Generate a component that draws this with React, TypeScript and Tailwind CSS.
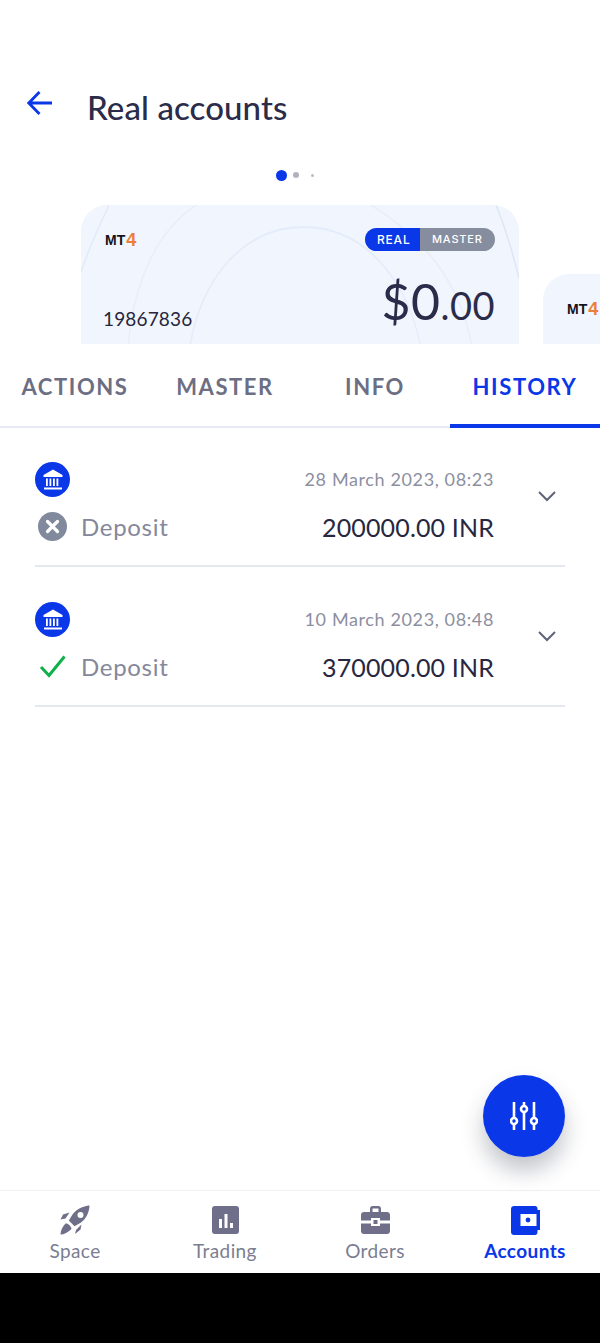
import React from "react";

const font = { fontFamily: '"Lato", "Noto Sans", sans-serif' };

function CardArcs() {
  return (
    <svg className="absolute inset-0 h-full w-full" viewBox="0 0 438 139" fill="none" preserveAspectRatio="none">
      <path d="M0 55C10 30 20 15 28 0" stroke="#e3eaf8" strokeWidth="1.5" />
      <path d="M46 139C46 75 70 25 115 0" stroke="#e8eefa" strokeWidth="1.5" />
      <path d="M106 139C110 65 160 18 222 18C290 18 336 70 344 139" stroke="#e4ecfa" strokeWidth="1.5" />
      <path d="M290 0C350 30 390 75 394 139" stroke="#e8eefa" strokeWidth="1.5" />
      <path d="M415 0C425 20 432 40 438 60" stroke="#dfe6f5" strokeWidth="1.5" />
    </svg>
  );
}

function Mt4({ className = "" }: { className?: string }) {
  return (
    <div className={`flex items-center leading-none ${className}`} style={{ fontFamily: '"Liberation Sans", sans-serif' }}>
      <span className="text-[14px] font-bold text-[#14141c]">MT</span>
      <span className="ml-[1px] text-[18px] font-bold text-[#ea7f3c]">4</span>
    </div>
  );
}

function BankBadge() {
  return (
    <div className="flex h-[35px] w-[35px] items-center justify-center rounded-full bg-[#0a37e8]">
      <svg width="24" height="24" viewBox="0 0 24 24" fill="none">
        <path d="M12 1.5L21.5 7V9H2.5V7L12 1.5Z" fill="#fff" />
        <rect x="5" y="10.5" width="1.8" height="7.5" fill="#fff" />
        <rect x="8.5" y="10.5" width="1.8" height="7.5" fill="#fff" />
        <rect x="12" y="10.5" width="1.8" height="7.5" fill="#fff" />
        <rect x="15.5" y="10.5" width="1.8" height="7.5" fill="#fff" />
        <rect x="3" y="19.5" width="18" height="2" fill="#fff" />
      </svg>
    </div>
  );
}

function FailedIcon() {
  return (
    <svg width="29" height="29" viewBox="0 0 29 29">
      <circle cx="14.5" cy="14.5" r="14.5" fill="#818a9d" />
      <path d="M9.5 9.5L19.5 19.5M19.5 9.5L9.5 19.5" stroke="#fff" strokeWidth="3.2" strokeLinecap="round" />
    </svg>
  );
}

function DoneIcon() {
  return (
    <svg width="29" height="29" viewBox="0 0 29 29" fill="none">
      <path d="M3 15L11 23.5L26.5 4.5" stroke="#0fb04a" strokeWidth="3" />
    </svg>
  );
}

function Chevron() {
  return (
    <svg width="20" height="12" viewBox="0 0 20 12" fill="none">
      <path d="M2 2L10 10L18 2" stroke="#5f6378" strokeWidth="2" />
    </svg>
  );
}

function HistoryRow({ date, amount, status }: { date: string; amount: string; status: React.ReactNode }) {
  return (
    <div className="mx-[35px] flex h-[140px] items-start border-b-2 border-[#e6e8ef] pt-[35px]">
      <div className="flex flex-col">
        <BankBadge />
        <div className="mt-[15px] flex items-center">
          <div className="ml-[3px] flex h-[29px] w-[29px] items-center justify-center">{status}</div>
          <span className="ml-[14px] text-[24px] leading-[29px] tracking-[0.7px] text-[#85879a]">Deposit</span>
        </div>
      </div>
      <div className="flex-1 pt-[6px] text-right">
        <div className="text-[18px] leading-[22px] tracking-[0.62px] text-[#8d8f9f]">{date}</div>
        <div className="mt-[23px] text-[25px] leading-[29px] tracking-[0.15px] text-[#27273f]">{amount}</div>
      </div>
      <div className="ml-[43px] mr-[8px] mt-[28px]">
        <Chevron />
      </div>
    </div>
  );
}

function NavItem({ label, icon, active }: { label: string; icon: React.ReactNode; active?: boolean }) {
  return (
    <div className="flex flex-1 flex-col items-center pt-[14px]">
      <div className="flex h-[30px] items-center justify-center">{icon}</div>
      <span className={`mt-[5px] text-[19px] leading-[22px] tracking-[0.4px] ${active ? "font-bold text-[#0a37e8]" : "text-[#7b7d90]"}`}>{label}</span>
    </div>
  );
}

export default function App() {
  return (
    <div className="relative flex h-[1343px] w-[600px] flex-col overflow-hidden bg-white" style={font}>
      <header className="flex h-[160px] items-start pl-[27px] pt-[87px]">
        <svg width="26" height="26" viewBox="0 0 26 26" fill="none" className="mt-[3px]">
          <path d="M25 13H2M12.5 2L1.8 13L12.5 24" stroke="#0a37e8" strokeWidth="2.8" />
        </svg>
        <h1 className="ml-[34px] text-[33px] font-medium leading-[40px] tracking-[0.1px] text-[#2b2b4a]">Real accounts</h1>
      </header>

      <div className="flex h-[30px] items-center justify-center pr-[10px]">
        <span className="h-[11px] w-[11px] rounded-full bg-[#0a37e8]" />
        <span className="ml-[6px] h-[6px] w-[6px] rounded-full bg-[#b0b3bf]" />
        <span className="ml-[12px] h-[3px] w-[3px] rounded-full bg-[#b9bbc6]" />
      </div>

      {/* Account cards carousel, clipped at the tab strip */}
      <div className="flex h-[154px] items-start gap-[24px] overflow-hidden pl-[81px] pt-[15px]">
        <div className="relative h-[170px] w-[438px] shrink-0 overflow-hidden rounded-[26px] bg-[#f1f5fd]">
          <CardArcs />
          <div className="relative flex h-full flex-col pl-[22px] pr-[24px]">
            <div className="flex items-start justify-between pt-[23px]">
              <Mt4 className="pl-[2px] pt-[3px]" />
              <div className="flex h-[23px] overflow-hidden rounded-full text-[12px] leading-[23px] tracking-[0.8px] text-white" style={{ fontFamily: '"Inter", sans-serif', fontWeight: 500 }}>
                <span className="w-[55px] bg-[#0a37e8] pl-[12px]">REAL</span>
                <span className="w-[75px] bg-[#858d9f] pl-[12px] text-[11px]">MASTER</span>
              </div>
            </div>
            <div className="mt-[22px] flex items-end justify-between">
              <span className="mb-[12px] text-[19px] leading-[22px] tracking-[0.15px] text-[#26263c]">19867836</span>
              <span className="leading-[56px] tracking-[0.5px] text-[#2b2b4a]">
                <span className="text-[50px]">$0</span>
                <span className="text-[38px]">.00</span>
              </span>
            </div>
          </div>
        </div>
        <div className="relative mt-[69px] h-[100px] w-[200px] shrink-0 overflow-hidden rounded-[26px] bg-[#f1f5fd] pl-[24px] pt-[26px]">
          <Mt4 />
        </div>
      </div>

      <nav className="flex h-[84px] border-b-2 border-[#e7eaf3] text-[22px] font-bold leading-[26px] tracking-[1.6px] text-[#6c6e84]">
        <div className="-mb-[2px] flex w-[150px] justify-center pt-[30px]">ACTIONS</div>
        <div className="-mb-[2px] flex w-[150px] justify-center pt-[30px]">MASTER</div>
        <div className="-mb-[2px] flex w-[150px] justify-center pt-[30px]">INFO</div>
        <div className="-mb-[2px] flex w-[150px] justify-center border-b-[4px] border-[#0a37e8] pt-[30px] text-[#0a37e8]">HISTORY</div>
      </nav>

      <main className="-mt-[1px] flex-1">
        <HistoryRow date="28 March 2023, 08:23" amount="200000.00 INR" status={<FailedIcon />} />
        <HistoryRow date="10 March 2023, 08:48" amount="370000.00 INR" status={<DoneIcon />} />
      </main>

      <button className="absolute left-[483px] top-[1075px] flex h-[82px] w-[82px] items-center justify-center rounded-full bg-[#0a37e8] shadow-[0_14px_22px_rgba(40,45,70,0.28)]">
        <svg width="28" height="30" viewBox="0 0 28 30" fill="none" stroke="#fff" strokeWidth="2.6">
          <path d="M4 1V16M4 24V29M14 1V4M14 12V29M24 1V16M24 24V29" />
          <circle cx="4" cy="20" r="3" />
          <circle cx="14" cy="8" r="3" />
          <circle cx="24" cy="20" r="3" />
        </svg>
      </button>

      <footer className="flex h-[83px] border-t border-[#eef0f4] bg-white">
        <NavItem
          label="Space"
          icon={
            <svg width="30" height="30" viewBox="0 0 30 30" fill="#6f6f8a">
              <path fillRule="evenodd" d="M28.5 0.5C22 1.5 16 4.5 12.5 9.5L8.8 15.5L14.5 21.2L21 17.5C26 14 28.8 8 29.5 1.5C29.6 0.9 29.1 0.4 28.5 0.5ZM20.5 7A3 3 0 1 0 20.5 13A3 3 0 1 0 20.5 7Z" />
              <path d="M9.5 7.5L3 9.5L0.5 14.5L5.5 13.5Z" />
              <path d="M16 25L21.5 19.5L20.5 24.5L15 29Z" />
              <path d="M5.5 18.5C8 18 11 21 11.5 24C8 27.5 4 29.5 0.5 29.5C0.5 25.5 2.5 21.5 5.5 18.5Z" />
            </svg>
          }
        />
        <NavItem
          label="Trading"
          icon={
            <svg width="27" height="28" viewBox="0 0 27 28">
              <rect width="27" height="28" rx="3" fill="#6f6f8a" />
              <rect x="7" y="13" width="3" height="9" fill="#fff" />
              <rect x="12.5" y="8" width="3" height="14" fill="#fff" />
              <rect x="18" y="17" width="3" height="5" fill="#fff" />
            </svg>
          }
        />
        <NavItem
          label="Orders"
          icon={
            <svg width="29" height="28" viewBox="0 0 29 28" fill="#6f6f8a">
              <path fillRule="evenodd" d="M9 6V3C9 1.2 10 0 11.5 0H17.5C19 0 20 1.2 20 3V6H26C27.7 6 29 7.3 29 9V14.5H19V12H10V14.5H0V9C0 7.3 1.3 6 3 6ZM11.5 2.5V6H17.5V2.5Z" />
              <path d="M0 17.5H10V20H19V17.5H29V25C29 26.7 27.7 28 26 28H3C1.3 28 0 26.7 0 25Z" />
              <rect x="12.5" y="14" width="4" height="4" fill="#6f6f8a" />
            </svg>
          }
        />
        <NavItem
          active
          label="Accounts"
          icon={
            <svg width="29" height="29" viewBox="0 0 29 29" fill="#0a37e8">
              <path d="M3 0H24C25.5 0 26.5 1 26.5 2.5V4H6V24H26.5V26C26.5 27.7 25.5 29 24 29H3C1.3 29 0 27.7 0 26V3C0 1.3 1.3 0 3 0Z" />
              <path fillRule="evenodd" d="M6 4H29V24H6ZM9.5 8V20H25.5V8Z" />
              <circle cx="17" cy="14" r="2.4" />
            </svg>
          }
        />
      </footer>

      <div className="h-[70px] bg-black" />
    </div>
  );
}
